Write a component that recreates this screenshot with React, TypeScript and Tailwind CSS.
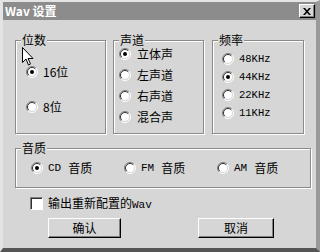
import React from 'react';

// Wav 设置 - an old Windows style settings dialog

const cjk = { fontFamily: '"Noto Sans CJK SC", "Liberation Sans", sans-serif' };
const mono = { fontFamily: '"Liberation Mono", "Noto Sans CJK SC", monospace' };

const Radio: React.FC<{ checked?: boolean }> = ({ checked }) => (
    <svg width="12" height="12" viewBox="0 0 12 12" className="shrink-0">
        <circle cx="6" cy="6" r="5" fill="#fff" />
        <path d="M2.1 9.9 A5.5 5.5 0 0 1 9.9 2.1" fill="none" stroke="#808080" strokeWidth="1" />
        <path d="M2.8 9.2 A4.5 4.5 0 0 1 9.2 2.8" fill="none" stroke="#303030" strokeWidth="1" />
        <path d="M9.9 2.1 A5.5 5.5 0 0 1 2.1 9.9" fill="none" stroke="#fff" strokeWidth="1" />
        <path d="M9.2 2.8 A4.5 4.5 0 0 1 2.8 9.2" fill="none" stroke="#d6d6d6" strokeWidth="1" />
        {checked && <circle cx="6" cy="6" r="2" fill="#000" />}
    </svg>
);

const Option: React.FC<{ label: string; checked?: boolean; latin?: boolean; gap?: string }> = ({ label, checked, latin, gap = 'gap-[5px]' }) => (
    <div className={`flex items-center h-[14px] ${gap}`}>
        <Radio checked={checked} />
        <span className={`${latin ? 'text-[10.5px]' : 'text-[12px]'} leading-[14px] text-black whitespace-nowrap`} style={latin ? mono : cjk}>
            {label}
        </span>
    </div>
);

const Group: React.FC<{ title: string; className?: string; children: React.ReactNode }> = ({ title, className = '', children }) => (
    <fieldset className={`border border-[#8a8a8a] shadow-[1px_1px_0_#fff,inset_1px_1px_0_#fff] ${className}`}>
        <legend className="ml-[5px] px-[1px] bg-[#d6d6d6] text-[12px] leading-[14px] text-black" style={cjk}>
            {title}
        </legend>
        {children}
    </fieldset>
);

const Button: React.FC<{ label: string; className?: string }> = ({ label, className = '' }) => (
    <button
        className={`h-[20px] border border-t-white border-l-white border-b-black border-r-black shadow-[inset_-1px_-1px_0_#808080] bg-[#d6d6d6] text-[12px] leading-[14px] text-black ${className}`}
        style={cjk}
    >
        {label}
    </button>
);

const App: React.FC = () => {
    return (
        <div className="relative w-[320px] h-[252px] bg-[#d6d6d6] overflow-hidden border-l-[3px] border-t-[2px] border-l-[#e4e4e4] border-t-[#e4e4e4] border-r-[4px] border-r-[#9a9a9a] border-b-[4px] border-b-[#555]">
            {/* Title bar */}
            <div className="flex items-center justify-between h-[18px] bg-[#8c8c8c] pl-[2px] pr-[1px]">
                <span className="text-[12px] leading-[14px] font-bold text-white" style={cjk}>Wav 设置</span>
                <button className="flex items-center justify-center w-[16px] h-[14px] bg-[#d6d6d6] border border-t-white border-l-white border-b-black border-r-black shadow-[inset_-1px_-1px_0_#808080]">
                    <svg width="8" height="7" viewBox="0 0 8 7">
                        <path d="M0 0h2l2 2.2L6 0h2L5 3.5 8 7H6L4 4.8 2 7H0l3-3.5z" fill="#000" />
                    </svg>
                </button>
            </div>

            {/* Body */}
            <div className="pl-[12px]">
                <div className="flex mt-[13px]">
                    <Group title="位数" className="w-[91px] h-[101px]">
                        <div className="flex flex-col gap-[21px] pt-[18px] pl-[10px]">
                            <Option label="16位" checked />
                            <Option label="8位" />
                        </div>
                    </Group>
                    <Group title="声道" className="w-[91px] h-[101px] ml-[7px]">
                        <div className="flex flex-col gap-[7px] pt-[0px] pl-[5px]">
                            <Option label="立体声" checked gap="gap-[6px]" />
                            <Option label="左声道" gap="gap-[6px]" />
                            <Option label="右声道" gap="gap-[6px]" />
                            <Option label="混合声" gap="gap-[6px]" />
                        </div>
                    </Group>
                    <Group title="频率" className="w-[92px] h-[101px] ml-[8px]">
                        <div className="flex flex-col gap-[4px] pt-[5px] pl-[9px]">
                            <Option label="48KHz" latin />
                            <Option label="44KHz" latin checked />
                            <Option label="22KHz" latin />
                            <Option label="11KHz" latin />
                        </div>
                    </Group>
                </div>

                <Group title="音质" className="w-[289px] h-[47px] mt-[7px]">
                    <div className="flex pt-[6px] pl-[15px]">
                        {['CD', 'FM', 'AM'].map((q, i) => (
                            <div key={q} className="flex items-center gap-[5px] h-[14px] w-[93px]">
                                <Radio checked={i === 0} />
                                <span className="text-[11px] leading-[14px] text-black" style={mono}>{q}</span>
                                <span className="ml-[2px] text-[12px] leading-[14px] text-black" style={cjk}>音质</span>
                            </div>
                        ))}
                    </div>
                </Group>

                <div className="flex items-center gap-[5px] mt-[9px] ml-[15px] h-[13px]">
                    <div className="w-[13px] h-[13px] bg-white border border-t-[#808080] border-l-[#808080] border-b-white border-r-white shadow-[inset_1px_1px_0_#303030]" />
                    <span className="text-[12px] leading-[14px] text-black" style={cjk}>
                        输出重新配置的<span className="text-[11px]" style={mono}>Wav</span>
                    </span>
                </div>

                <div className="flex mt-[8px] ml-[33px]">
                    <Button label="确认" className="w-[73px]" />
                    <Button label="取消" className="w-[76px] ml-[77px]" />
                </div>
            </div>

            {/* Mouse pointer */}
            <svg className="absolute left-[19px] top-[45px]" width="12" height="19" viewBox="0 0 12 19">
                <path d="M0.5 0.5 L0.5 15.5 L4 12 L6.5 18 L8.5 17 L6 11.5 L11 11.5 Z" fill="#fff" stroke="#000" strokeWidth="1" strokeLinejoin="miter" />
            </svg>
        </div>
    );
};

export default App;
